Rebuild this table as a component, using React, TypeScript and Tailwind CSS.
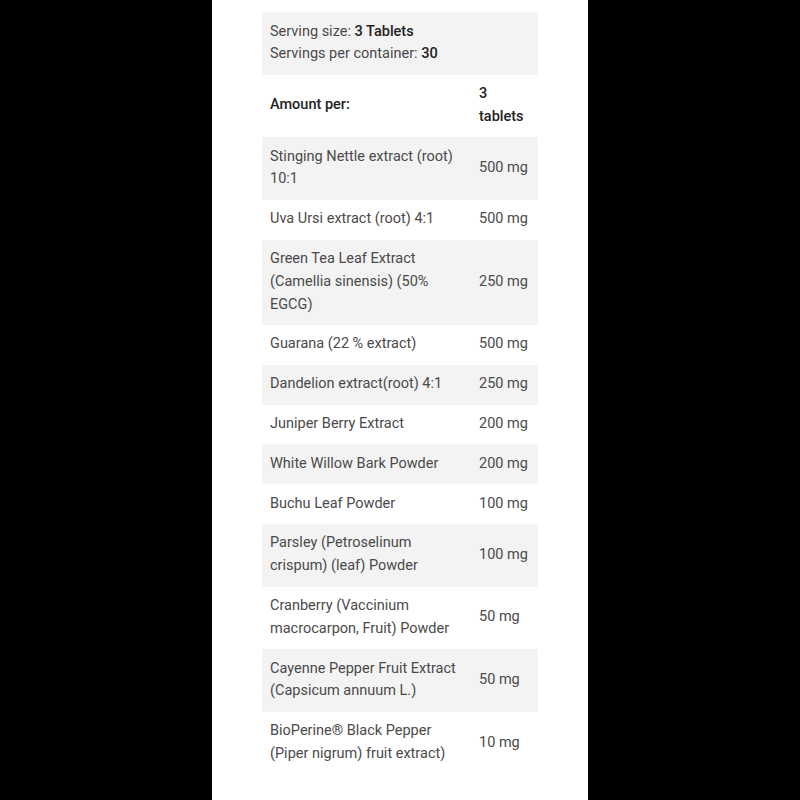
const rows: [string, string][] = [
  ["Stinging Nettle extract (root) 10:1", "500 mg"],
  ["Uva Ursi extract (root) 4:1", "500 mg"],
  ["Green Tea Leaf Extract (Camellia sinensis) (50% EGCG)", "250 mg"],
  ["Guarana (22 % extract)", "500 mg"],
  ["Dandelion extract(root) 4:1", "250 mg"],
  ["Juniper Berry Extract", "200 mg"],
  ["White Willow Bark Powder", "200 mg"],
  ["Buchu Leaf Powder", "100 mg"],
  ["Parsley (Petroselinum crispum) (leaf) Powder", "100 mg"],
  ["Cranberry (Vaccinium macrocarpon, Fruit) Powder", "50 mg"],
  ["Cayenne Pepper Fruit Extract (Capsicum annuum L.)", "50 mg"],
  ["BioPerine® Black Pepper (Piper nigrum) fruit extract)", "10 mg"],
];

export default function App() {
  return (
    <div className="flex h-[800px] w-[800px] justify-center bg-black font-['Roboto',sans-serif] text-[14.5px] leading-[22.8px] text-[#4a4a4a]">
      <div className="w-[376px] bg-white px-[50px] pt-[12px]">
        <div className="bg-[#f3f3f3] px-2 py-[8.5px]">
          <div>
            Serving size: <span className="font-medium text-[#222]">3 Tablets</span>
          </div>
          <div>
            Servings per container: <span className="font-medium text-[#222]">30</span>
          </div>
        </div>
        <table className="w-full border-collapse">
          <tbody>
            <tr>
              <td className="w-[209px] px-2 py-[8.5px] align-middle font-medium text-[#222]">Amount per:</td>
              <td className="px-2 py-[8.5px] font-medium text-[#222]">3 tablets</td>
            </tr>
            {rows.map(([name, amount], i) => (
              <tr key={name} className={i % 2 === 0 ? "bg-[#f3f3f3]" : "bg-white"}>
                <td className="w-[209px] px-2 py-[8.5px] align-middle">{name}</td>
                <td className="px-2 py-[8.5px] align-middle">{amount}</td>
              </tr>
            ))}
          </tbody>
        </table>
      </div>
    </div>
  );
}
